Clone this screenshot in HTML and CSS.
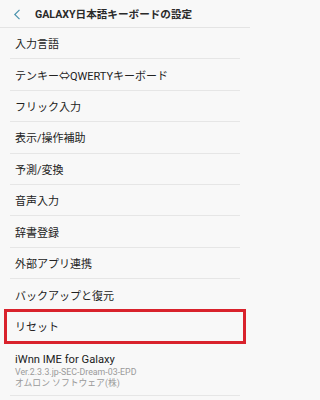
FILE: index.html
```html
<!DOCTYPE html>
<html lang="ja">
<head>
<meta charset="utf-8">
<link rel="stylesheet" href="styles.css">
</head>
<body>
<div class="screen">
  <header class="bar">
    <svg class="back" width="8" height="11" viewBox="0 0 8 11"><path d="M6.5 0.8 L1.8 5.5 L6.5 10.2" fill="none" stroke="#4b93ad" stroke-width="1.2"/></svg>
    <span class="title">GALAXY日本語キーボードの設定</span>
  </header>
  <ul class="list">
    <li class="row">入力言語</li>
    <li class="row">テンキー⇔QWERTYキーボード</li>
    <li class="row">フリック入力</li>
    <li class="row">表示/操作補助</li>
    <li class="row">予測/変換</li>
    <li class="row">音声入力</li>
    <li class="row">辞書登録</li>
    <li class="row">外部アプリ連携</li>
    <li class="row tall">バックアップと復元</li>
    <li class="row reset">リセット</li>
    <li class="row about">
      <span class="name">iWnn IME for Galaxy</span>
      <span class="sub ver">Ver.2.3.3.jp-SEC-Dream-03-EPD</span>
      <span class="sub">オムロン ソフトウェア(株)</span>
    </li>
  </ul>
</div>
</body>
</html>
```
FILE: styles.css
```css
html, body {
  margin: 0;
  padding: 0;
  background: #f8f8f8;
}
.screen {
  width: 250px;
  height: 400px;
  overflow: hidden;
  font-family: Roboto, "Noto Sans CJK JP", sans-serif;
  color: #222;
}
.bar {
  height: 28px;
  box-sizing: border-box;
  border-bottom: 1px solid #e4e4e4;
  display: flex;
  align-items: center;
  padding-left: 13px;
}
.back {
  display: block;
  margin-top: 1px;
}
.title {
  margin-left: 14px;
  font-size: 10.6px;
  font-weight: 700;
  color: #2a2a2a;
}
.list {
  list-style: none;
  margin: 0 10px;
  padding: 0;
}
.row {
  height: 31.4px;
  box-sizing: border-box;
  border-bottom: 1px solid #e6e6e6;
  display: flex;
  align-items: center;
  padding-left: 5px;
  font-size: 11px;
}
.row.tall {
  height: 32px;
}
.row.reset {
  height: 31px;
  position: relative;
  border-bottom-color: transparent;
}
.row.reset::after {
  content: "";
  position: absolute;
  left: -6px;
  right: -6px;
  top: -2px;
  bottom: -3px;
  border: 3px solid #d9222c;
}
.row.about {
  height: 54px;
  flex-direction: column;
  align-items: flex-start;
  justify-content: flex-start;
  padding-top: 10.5px;
}
.name {
  font-size: 11.2px;
  line-height: 13px;
  color: #222;
}
.sub {
  font-size: 8.8px;
  line-height: 11px;
  color: #9a9a9a;
}
.sub.ver {
  margin-top: 1.5px;
}
```
